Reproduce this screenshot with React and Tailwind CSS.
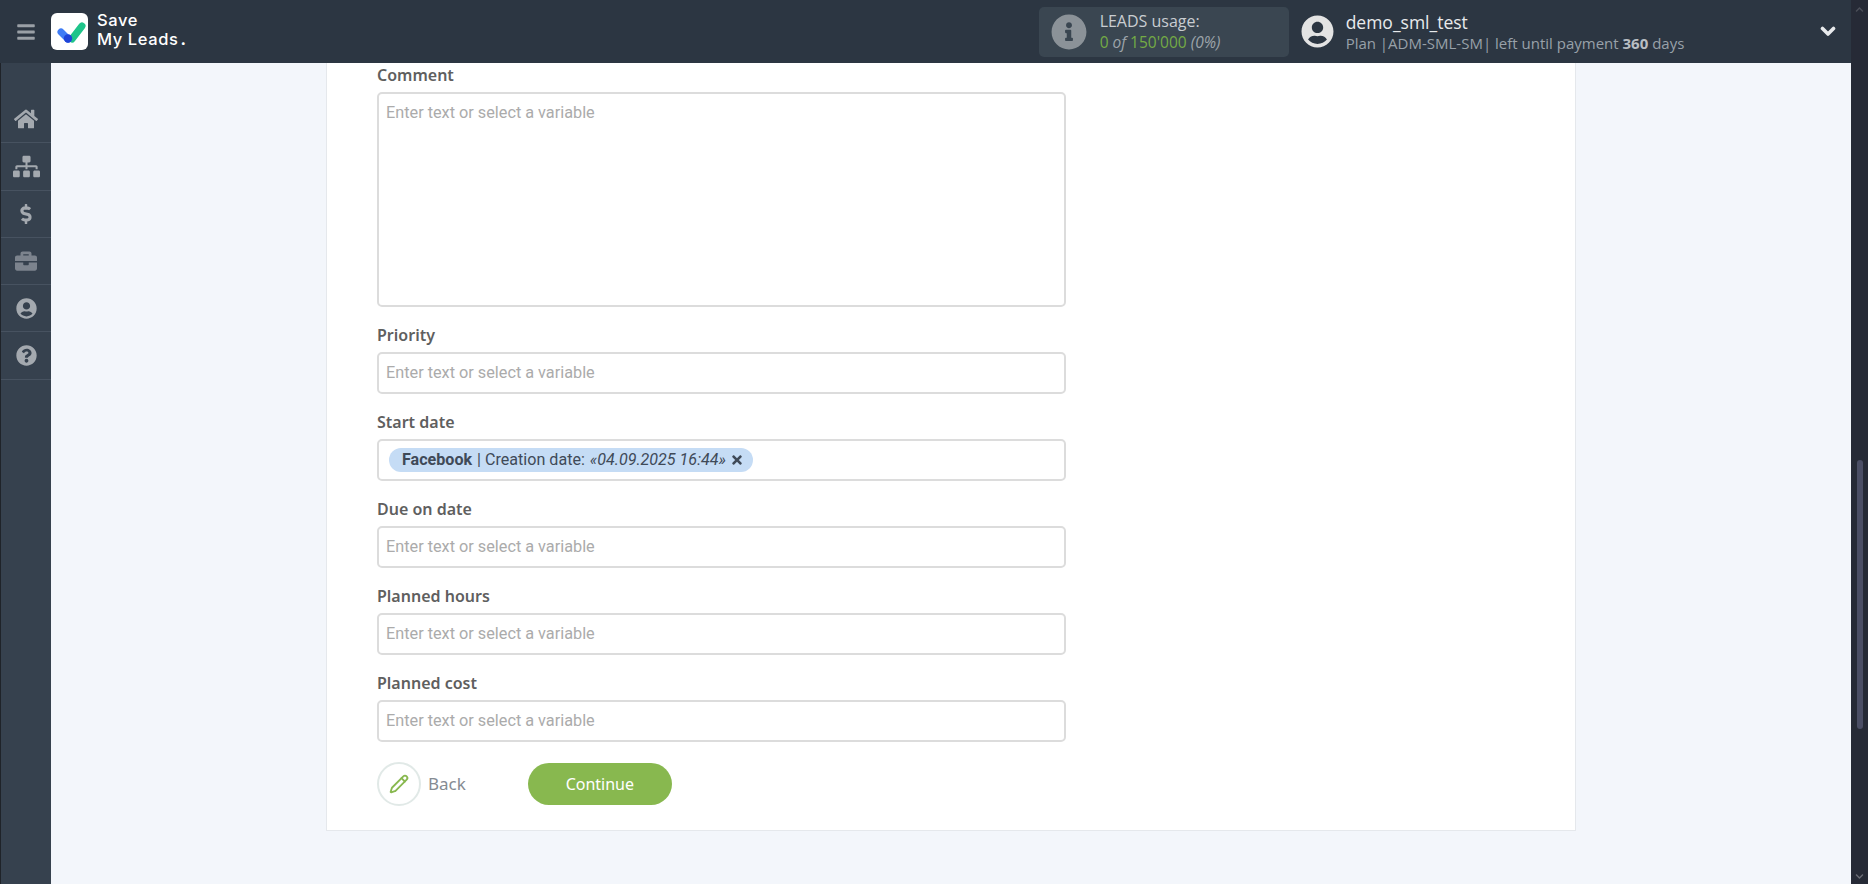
import { FaBars, FaBriefcase, FaChevronDown, FaChevronUp, FaDollarSign, FaHome, FaInfoCircle, FaQuestionCircle, FaSitemap, FaTimes, FaUserCircle } from "react-icons/fa";
import { Pencil } from "lucide-react";

const navItems = [
  { icon: FaHome, size: 24, color: "text-[#a4a9af]" },
  { icon: FaSitemap, size: 27, color: "text-[#a4a9af]" },
  { icon: FaDollarSign, size: 20, color: "text-[#a4a9af]" },
  { icon: FaBriefcase, size: 22, color: "text-[#7c838d]" },
  { icon: FaUserCircle, size: 21, color: "text-[#a4a9af]" },
  { icon: FaQuestionCircle, size: 21, color: "text-[#a4a9af]" },
];

function Field({ label, children, tall }) {
  return (
    <div className="mb-[16px]">
      <div className="h-[23px] font-['Noto_Sans',sans-serif] text-[16px] leading-[24px] font-semibold text-[#5f5f5f]">{label}</div>
      <div className={`mt-[6px] w-[689px] rounded-[5px] border-2 border-[#dcdcdc] bg-white pl-[7px] font-['Roboto',sans-serif] text-[16.25px] ${tall ? "h-[215px] pt-[7px]" : "flex h-[42px] items-center"}`}>
        {children}
      </div>
    </div>
  );
}

const Placeholder = () => <span className="leading-[20px] text-[#ababab]">Enter text or select a variable</span>;

export default function App() {
  return (
    <div className="flex h-screen overflow-hidden bg-[#f3f6fb]">
      <div className="flex min-w-0 flex-1 flex-col">
        {/* top bar */}
        <header className="flex h-[63px] shrink-0 items-center bg-[#2c3642] font-['Open_Sans',sans-serif]">
          <div className="flex w-[51px] shrink-0 justify-center">
            <FaBars size={20} className="text-[#9aa0a6]" />
          </div>
          <div className="relative h-[37px] w-[37px] shrink-0 rounded-[6px] bg-white">
            <svg viewBox="0 0 37 37" className="h-[37px] w-[37px]">
              <path d="M21 26 L31 13" stroke="#1fc48a" strokeWidth="7" strokeLinecap="round" fill="none" />
              <path d="M10 19 L17 26" stroke="#3f7cf5" strokeWidth="7" strokeLinecap="round" fill="none" />
              <circle cx="17" cy="25.5" r="4.2" fill="#1f44d8" />
            </svg>
          </div>
          <div className="mb-[4px] ml-[9px] font-['Inter',sans-serif] text-[16.5px] leading-[19px] font-medium tracking-[0.6px] text-white">
            <div>Save</div>
            <div>My Leads<span className="ml-[2px] font-bold">.</span></div>
          </div>

          <div className="ml-[852px] flex h-[50px] w-[250px] shrink-0 items-center rounded-[5px] bg-[#3a4651] pl-[12px]">
            <FaInfoCircle size={36} className="text-[#8b9298]" />
            <div className="ml-[13px] leading-[21px]">
              <div className="text-[16px] text-[#c9cdd1]">LEADS usage:</div>
              <div className="text-[15.5px] text-[#74ab45]">
                0 <i className="text-[#9da4aa]">of</i> 150'000 <i className="text-[#9da4aa]">(0%)</i>
              </div>
            </div>
          </div>

          <FaUserCircle size={33} className="ml-[12px] shrink-0 text-[#e3e3e3]" />
          <div className="ml-[12px] whitespace-nowrap">
            <div className="text-[17.5px] leading-[23px] text-[#e8eaec]">demo_sml_test</div>
            <div className="text-[15px] leading-[19px] text-[#98a1a9]">
              Plan |ADM-SML-SM| left until payment <b className="text-[#b9bec3]">360</b> days
            </div>
          </div>
          <svg viewBox="0 0 16 11" className="ml-auto mr-[15px] h-[11px] w-[16px] shrink-0">
            <path d="M2.5 2.5 L8 8 L13.5 2.5" stroke="#e8eaec" strokeWidth="3.6" strokeLinecap="round" strokeLinejoin="round" fill="none" />
          </svg>
        </header>

        <div className="flex min-h-0 flex-1">
          {/* side nav */}
          <nav className="w-[51px] shrink-0 border-l border-[#1f2329] bg-[#36414e] pt-[33px]">
            {navItems.map(({ icon: Icon, size, color }, i) => (
              <div key={i} className="flex h-[47.3px] items-center justify-center border-b border-[#475260]">
                <Icon size={size} className={color} />
              </div>
            ))}
          </nav>

          {/* form */}
          <main className="min-w-0 flex-1 pl-[275px] pr-[275px]">
            <div className="h-[768px] border border-t-0 border-[#e5e8ec] bg-white pl-[50px]">
              <Field label="Comment" tall><Placeholder /></Field>
              <Field label="Priority"><Placeholder /></Field>
              <Field label="Start date">
                <span className="ml-[3px] flex h-[24px] items-center rounded-full bg-[#c5dcf5] pl-[13px] pr-[9px] text-[16.1px] text-[#3f4a58]">
                  <b>Facebook</b>
                  <span className="ml-[5px]">| Creation date:</span>
                  <i className="ml-[5px]">«04.09.2025 16:44»</i>
                  <FaTimes size={14} className="ml-[4px]" />
                </span>
              </Field>
              <Field label="Due on date"><Placeholder /></Field>
              <Field label="Planned hours"><Placeholder /></Field>
              <Field label="Planned cost"><Placeholder /></Field>

              <div className="mt-[20px] flex items-center font-['Noto_Sans',sans-serif]">
                <div className="flex h-[44px] w-[44px] items-center justify-center rounded-full border-2 border-[#e1e9e7]">
                  <Pencil size={20} strokeWidth={2.2} className="text-[#88b84f]" />
                </div>
                <span className="ml-[7px] text-[17px] text-[#858b92]">Back</span>
                <button className="ml-[62px] h-[42px] w-[144px] rounded-full bg-[#88b84f] text-[16px] text-white">Continue</button>
              </div>
            </div>
          </main>
        </div>
      </div>

      {/* page scrollbar */}
      <div className="flex w-[17px] shrink-0 flex-col items-center bg-[#262a36] pt-[5px] pb-[3px]">
        <FaChevronUp size={9} className="text-[#4c4f59]" />
        <div className="mt-[446px] h-[269px] w-[6px] rounded-full bg-[#4b4e65]" />
        <FaChevronDown size={9} className="mt-auto text-[#6a6c74]" />
      </div>
    </div>
  );
}
